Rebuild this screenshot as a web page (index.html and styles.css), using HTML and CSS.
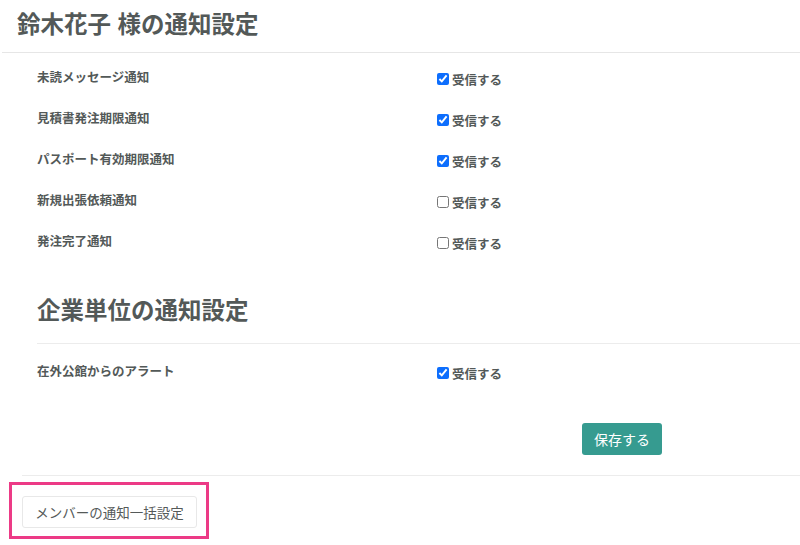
FILE: index.html
```html
<!DOCTYPE html>
<html lang="ja">
<head>
  <meta charset="UTF-8" />
  <title>通知設定</title>
  <link rel="stylesheet" href="styles.css">
</head>
<body>
  <div class="page">
    <h1 class="title">鈴木花子 様の通知設定</h1>

    <div class="settings">
      <div class="row">
        <span class="label">未読メッセージ通知</span>
        <label class="check"><input type="checkbox" checked> 受信する</label>
      </div>
      <div class="row">
        <span class="label">見積書発注期限通知</span>
        <label class="check"><input type="checkbox" checked> 受信する</label>
      </div>
      <div class="row">
        <span class="label">パスポート有効期限通知</span>
        <label class="check"><input type="checkbox" checked> 受信する</label>
      </div>
      <div class="row">
        <span class="label">新規出張依頼通知</span>
        <label class="check"><input type="checkbox"> 受信する</label>
      </div>
      <div class="row">
        <span class="label">発注完了通知</span>
        <label class="check"><input type="checkbox"> 受信する</label>
      </div>

      <h2 class="subtitle">企業単位の通知設定</h2>

      <div class="row">
        <span class="label">在外公館からのアラート</span>
        <label class="check"><input type="checkbox" checked> 受信する</label>
      </div>
    </div>

    <div class="actions">
      <button class="btn-save">保存する</button>
    </div>

    <div class="footer">
      <div class="highlight">
        <button class="btn-bulk">メンバーの通知一括設定</button>
      </div>
    </div>
  </div>
</body>
</html>
```

FILE: styles.css
```css
body {
    margin: 0;
    font-family: "Liberation Sans", "Noto Sans CJK JP", sans-serif;
    color: #535958;
    background: #ffffff;
}

.page {
    margin-left: 2px;
}

.title {
    margin: 0;
    height: 52px;
    line-height: 50px;
    padding-left: 15px;
    font-size: 23.5px;
    font-weight: bold;
    border-bottom: 1px solid #e6e6e6;
}

.settings {
    padding-left: 35px;
    padding-top: 3px;
}

.row {
    display: flex;
    height: 41px;
    align-items: center;
}

.label {
    width: 400px;
    font-size: 12.5px;
    font-weight: bold;
}

.check {
    display: flex;
    align-items: center;
    font-size: 12.5px;
    font-weight: bold;
    padding-top: 5px;
}

.check input {
    margin: 0 3px 0 0;
    width: 12px;
    height: 12px;
    accent-color: #0d6efd;
}

.subtitle {
    margin: 22px 0 0 0;
    height: 60px;
    line-height: 56px;
    font-size: 23.5px;
    font-weight: bold;
    border-bottom: 1px solid #ececec;
}

.settings .subtitle + .row {
    margin-top: 6px;
}

.actions {
    padding: 32px 0 20px 580px;
}

.btn-save {
    background: #369b90;
    color: #ffffff;
    border: none;
    border-radius: 3px;
    width: 80px;
    height: 32px;
    font-family: inherit;
    font-size: 14px;
}

.footer {
    margin-left: 20px;
    border-top: 1px solid #ececec;
    padding-top: 6px;
}

.highlight {
    margin-left: -13px;
    border: 3px solid #ec3a86;
    padding: 11px 0 0 10px;
    width: 184px;
    height: 40px;
}

.btn-bulk {
    background: #ffffff;
    border: 1px solid #e8e8e8;
    border-radius: 3px;
    width: 175px;
    height: 32px;
    color: #555a59;
    font-family: inherit;
    font-size: 13.5px;
}
```
